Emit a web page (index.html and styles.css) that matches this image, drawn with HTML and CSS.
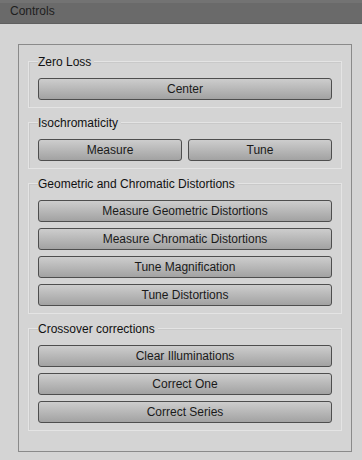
FILE: index.html
```html
<!DOCTYPE html>
<html>
<head>
<meta charset="utf-8">
<link rel="stylesheet" href="styles.css">
</head>
<body>
<div class="header">Controls</div>
<div class="panel">
  <div class="group">
    <div class="group-title">Zero Loss</div>
    <div class="buttons">
      <button class="btn">Center</button>
    </div>
  </div>
  <div class="group">
    <div class="group-title">Isochromaticity</div>
    <div class="buttons two">
      <button class="btn">Measure</button>
      <button class="btn">Tune</button>
    </div>
  </div>
  <div class="group">
    <div class="group-title">Geometric and Chromatic Distortions</div>
    <div class="buttons">
      <button class="btn">Measure Geometric Distortions</button>
      <button class="btn">Measure Chromatic Distortions</button>
      <button class="btn">Tune Magnification</button>
      <button class="btn">Tune Distortions</button>
    </div>
  </div>
  <div class="group">
    <div class="group-title">Crossover corrections</div>
    <div class="buttons">
      <button class="btn">Clear Illuminations</button>
      <button class="btn">Correct One</button>
      <button class="btn">Correct Series</button>
    </div>
  </div>
</div>
</body>
</html>
```
FILE: styles.css
```css
html, body {
  margin: 0;
  padding: 0;
  background: #d4d4d4;
  font-family: "Liberation Sans", Arial, sans-serif;
  font-size: 12px;
  color: #1a1a1a;
}
.header {
  height: 24px;
  box-sizing: border-box;
  background: linear-gradient(#737373 0, #737373 3px, #6a6a6a 3px, #6a6a6a 100%);
  border-bottom: 1px solid #5f5f5f;
  color: #1e1e1e;
  line-height: 23px;
  padding-left: 10px;
}
.panel {
  margin: 20px 0 0 18px;
  width: 334px;
  box-sizing: border-box;
  border: 1px solid #8a8a8a;
  padding: 16px 9px 20px 9px;
  display: flex;
  flex-direction: column;
  gap: 14px;
}
.group {
  border: 1px solid #e4e4e4;
  box-shadow: inset 1px 1px 0 #c9c9c9;
  padding: 0 9px 7px 9px;
  display: flex;
  flex-direction: column;
}
.group-title {
  align-self: flex-start;
  margin: -7px 0 0 0;
  padding: 0 3px 0 0;
  height: 14px;
  line-height: 14px;
  background: #d4d4d4;
  color: #111;
  font-size: 12px;
}
.buttons {
  margin-top: 9px;
  display: flex;
  flex-direction: column;
  gap: 6px;
}
.buttons.two {
  flex-direction: row;
}
.buttons.two .btn {
  flex: 1;
}
.btn {
  height: 22px;
  margin: 0;
  padding: 0;
  box-sizing: border-box;
  border: 1px solid #4e4e4e;
  border-radius: 3px;
  background: linear-gradient(#cdcdcd, #a2a2a2);
  font-family: "Liberation Sans", Arial, sans-serif;
  font-size: 12px;
  color: #1a1a1a;
  text-align: center;
  line-height: 20px;
}
```
